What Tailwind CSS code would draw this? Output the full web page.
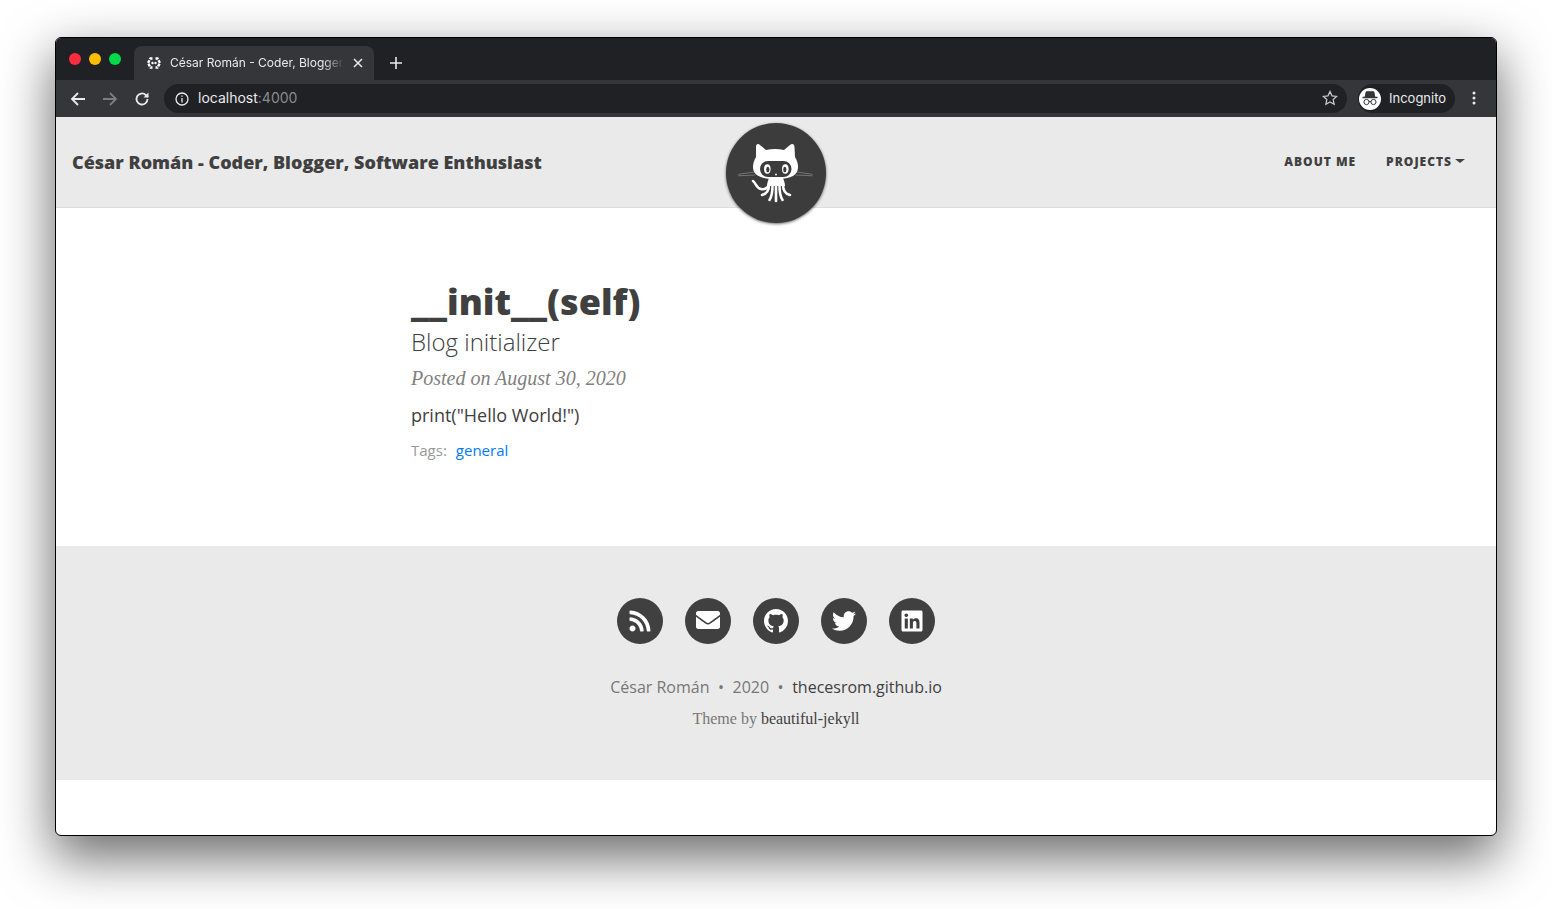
<!DOCTYPE html>
<html lang="en">
<head>
    <meta charset="UTF-8">
    <meta name="viewport" content="width=device-width, initial-scale=1.0">
    <title>César Román - Coder, Blogger, Software Enthusiast</title>
    <script src="https://cdn.jsdelivr.net/npm/@tailwindcss/browser@4"></script>
</head>
<body class="bg-white h-[909px] overflow-hidden font-['Open_Sans',sans-serif] pt-[37px] pl-[55px]">
    <!-- Browser window -->
    <div class="relative w-[1442px] h-[799px] flex flex-col bg-white border border-black rounded-[6px] overflow-hidden shadow-[0_20px_52px_2px_rgba(0,0,0,0.58)]">
        <!-- Tab strip -->
        <div class="h-[42px] shrink-0 bg-[#202124] flex items-end font-['Inter',sans-serif]">
            <div class="flex gap-2 w-[78px] pl-[13px] self-start pt-[15px]">
                <div class="w-3 h-3 rounded-full bg-[#ff2d3f]"></div>
                <div class="w-3 h-3 rounded-full bg-[#ffbd00]"></div>
                <div class="w-3 h-3 rounded-full bg-[#00d94a]"></div>
            </div>
            <div class="w-[240px] h-[34px] bg-[#35363a] rounded-t-[8px] flex items-center pl-3 pr-[11px]">
                <svg class="w-4 h-4 shrink-0" viewBox="0 0 16 16" fill="none" stroke="#fff" stroke-width="2.400">
                    <path d="M6.500 3.500H4.500L2 8l2.500 4.500h2M9.500 3.500h2L14 8l-2.500 4.500h-2" stroke-dasharray="3 1"/>
                    <circle cx="6.500" cy="8" r="1.200" fill="#fff" stroke="none"/>
                    <circle cx="9.500" cy="8" r="1.200" fill="#fff" stroke="none"/>
                </svg>
                <span class="ml-2 w-[174px] overflow-hidden whitespace-nowrap text-[12px] text-[#e8eaed] [mask-image:linear-gradient(to_right,black_88%,transparent)]">César Román - Coder, Blogger, Software Enthusiast</span>
                <svg class="w-[10px] h-[10px] ml-auto" viewBox="0 0 10 10" stroke="#e8eaed" stroke-width="1.500"><path d="M1 1l8 8M9 1l-8 8"/></svg>
            </div>
            <svg class="w-3 h-3 ml-4 mb-[11px]" viewBox="0 0 12 12" stroke="#e8eaed" stroke-width="1.600"><path d="M6 0v12M0 6h12"/></svg>
        </div>

        <!-- Toolbar -->
        <div class="h-[37px] shrink-0 bg-[#35363a] flex items-center pl-[14px] pr-[18px] font-['Inter',sans-serif]">
            <svg class="w-4 h-4 shrink-0" viewBox="0 0 16 16" fill="none" stroke="#e8eaed" stroke-width="1.800"><path d="M15 8H2M8 2L2 8l6 6"/></svg>
            <svg class="w-4 h-4 shrink-0 ml-4" viewBox="0 0 16 16" fill="none" stroke="#7c7d80" stroke-width="1.800"><path d="M1 8h13M8 2l6 6-6 6"/></svg>
            <svg class="w-4 h-4 shrink-0 ml-4" viewBox="0 0 16 16" fill="none" stroke="#e8eaed" stroke-width="1.800"><path d="M13.500 8A5.500 5.500 0 1 1 11.800 4L14 6"/><path d="M14.500 1.500V6.500H9.500" stroke="none" fill="#e8eaed"/></svg>
            <div class="ml-[14px] w-[1183px] h-[29px] rounded-full bg-[#202124] flex items-center pl-[11px] pr-[9px]">
                <svg class="w-[14px] h-[14px] shrink-0" viewBox="0 0 14 14" fill="none" stroke="#e8eaed" stroke-width="1.300"><circle cx="7" cy="7" r="6"/><path d="M7 6v4.500M7 3.500v1.300"/></svg>
                <span class="ml-[9px] mb-[2px] text-[14px] text-[#e8eaed]">localhost<span class="text-[#8a8b8e]">:4000</span></span>
                <svg class="w-4 h-4 ml-auto mb-[2px]" viewBox="0 0 16 16" fill="none" stroke="#c4c6c9" stroke-width="1.300"><path d="M8 1.500l2 4.300 4.700.6-3.500 3.200.9 4.700L8 12l-4.100 2.300.9-4.700L1.300 6.400 6 5.800z"/></svg>
            </div>
            <div class="ml-[11px] w-[97px] h-[29px] rounded-full bg-[#202124] flex items-center pl-[1px]">
                <div class="w-[22px] h-[22px] rounded-full bg-white">
                    <svg class="w-[22px] h-[22px]" viewBox="0 0 22 22" fill="none" stroke="#35363a" stroke-width="1">
                        <path d="M7.200 3.800h7.600l1 5.200H6.200z" fill="#35363a"/>
                        <path d="M3.500 9.500h15" stroke-width="1.400"/>
                        <circle cx="7.500" cy="14" r="2.600"/>
                        <circle cx="14.500" cy="14" r="2.600"/>
                        <path d="M10 13.500h2"/>
                    </svg>
                </div>
                <span class="ml-[8px] text-[13px] text-[#e8eaed]">Incognito</span>
            </div>
            <svg class="w-1 h-[14px] ml-[17px] mb-[2px]" viewBox="0 0 4 14" fill="#e8eaed"><circle cx="2" cy="2" r="1.500"/><circle cx="2" cy="7" r="1.500"/><circle cx="2" cy="12" r="1.500"/></svg>
        </div>

        <!-- Site nav -->
        <div class="h-[91px] shrink-0 bg-[#eaeaea] border-b border-[#dddddd] flex items-center justify-between pl-4 pr-[31px]">
            <a class="text-[18px] font-extrabold text-[#404040] leading-none">César Román - Coder, Blogger, Software Enthusiast</a>
            <div class="flex items-center gap-[30px] text-[12px] font-extrabold uppercase tracking-[1px] text-[#404040]">
                <a>About Me</a>
                <a class="flex items-center gap-[3px]">Projects<span class="w-0 h-0 mb-[2px] border-x-[5px] border-x-transparent border-t-[4px] border-t-[#404040]"></span></a>
            </div>
        </div>

        <!-- Avatar overlapping the nav -->
        <div class="absolute left-[670px] top-[85px] w-[100px] h-[100px] rounded-full bg-[#3c3c3c] shadow-[0_1px_3px_rgba(0,0,0,0.6)]">
            <svg class="w-full h-full" viewBox="0 0 100 100">
                <path d="M12.300 51.300l18.400-2.600M12.300 52.800l17-.8M86.500 51.300l-18.400-2.600M86.500 52.800l-17-.8" stroke="#8d8d8d" stroke-width="0.700" fill="none"/>
                <path d="M30 24c0-3 2-4 4-2l6 5c6-1.500 12-1.500 18 0l6-5c2-2 4.500-1 4.500 2l.5 10c2 3 3 7 3 10 0 8-6 12-22 12s-23-4-23-12c0-3 1-7 3-10z" fill="#fff"/>
                <rect x="34" y="38" width="31.500" height="16" rx="8" fill="#3c3c3c"/>
                <ellipse cx="41.300" cy="46" rx="3.300" ry="4.800" fill="#fff"/>
                <ellipse cx="59.300" cy="46" rx="3.300" ry="4.800" fill="#fff"/>
                <ellipse cx="41.800" cy="46.500" rx="1.600" ry="2.700" fill="#3c3c3c"/>
                <ellipse cx="58.800" cy="46.500" rx="1.600" ry="2.700" fill="#3c3c3c"/>
                <circle cx="50" cy="51.500" r="0.900" fill="#fff"/>
                <path d="M43 55h14c1 3 2 5 2 8H41c0-3 1-5 2-8z" fill="#fff"/>
                <path d="M43 62c0 6-3 9-7 10M46.500 62c0 8-1 12-3 15M50 62v16M53.500 62c0 8 1 12 3 15M57 62c0 6 3 9 7 10" stroke="#fff" stroke-width="2.600" stroke-linecap="round" fill="none"/>
                <path d="M27 58c3 2 3 7 8 8 3 1 6-1 8-4" stroke="#fff" stroke-width="2.500" stroke-linecap="round" fill="none"/>
            </svg>
        </div>

        <!-- Post -->
        <div class="h-[338px] shrink-0 pl-[355px] pt-[70px] text-[#404040]">
            <h1 class="text-[36px] font-extrabold leading-[48px]">__init__(self)</h1>
            <h2 class="text-[24px] font-light leading-[32px]">Blog initializer</h2>
            <p class="font-['Liberation_Serif',serif] text-[20px] text-[#808080] leading-[32px] mt-[4px]"><i>Posted on August 30, 2020</i></p>
            <p class="text-[18px] leading-[28px] mt-[7px]">print("Hello World!")</p>
            <p class="text-[15px] leading-[24px] mt-[9px]"><span class="text-[#999999]">Tags:</span><a class="ml-[9px] text-[#007bff]">general</a></p>
        </div>

        <!-- Footer -->
        <div class="h-[234px] shrink-0 bg-[#eaeaea] pt-[52px] flex flex-col items-center">
            <div class="flex gap-[22px]">
                <a class="w-[46px] h-[46px] rounded-full bg-[#404040] flex items-center justify-center">
                    <svg class="w-[24px] h-[24px]" viewBox="0 0 448 512" fill="#fff"><path d="M128.081 415.959c0 35.369-28.672 64.041-64.041 64.041S0 451.328 0 415.959s28.672-64.041 64.041-64.041 64.04 28.673 64.04 64.041zm175.66 47.25c-8.354-154.6-132.185-278.587-286.95-286.95C7.656 175.765 0 183.105 0 192.253v48.069c0 8.415 6.49 15.472 14.887 16.018 111.832 7.284 201.473 96.702 208.772 208.772.547 8.397 7.604 14.887 16.018 14.887h48.069c9.149.001 16.489-7.655 15.995-16.79zm144.249.288C439.596 229.677 251.465 40.445 16.503 32.01 7.473 31.686 0 38.981 0 48.016v48.068c0 8.625 6.835 15.645 15.453 15.999 191.179 7.839 344.627 161.316 352.465 352.465.353 8.618 7.373 15.453 15.999 15.453h48.068c9.034-.001 16.329-7.474 16.005-16.504z"/></svg>
                </a>
                <a class="w-[46px] h-[46px] rounded-full bg-[#404040] flex items-center justify-center">
                    <svg class="w-[24px] h-[24px] mb-[2px]" viewBox="0 0 512 512" fill="#fff"><path d="M502.3 190.8c3.900-3.100 9.700-.2 9.700 4.700V400c0 26.500-21.500 48-48 48H48c-26.500 0-48-21.500-48-48V195.600c0-5 5.700-7.800 9.700-4.700 22.400 17.400 52.100 39.500 154.100 113.600 21.100 15.400 56.700 47.800 92.200 47.600 35.700.3 72-32.800 92.300-47.600 102-74.100 131.600-96.300 154-113.700zM256 320c23.200.4 56.600-29.200 73.400-41.400 132.700-96.300 142.800-104.700 173.400-128.700 5.800-4.500 9.200-11.500 9.200-18.900v-19c0-26.500-21.500-48-48-48H48C21.500 64 0 85.500 0 112v19c0 7.400 3.400 14.300 9.200 18.900 30.600 23.900 40.700 32.400 173.400 128.700 16.800 12.200 50.200 41.800 73.400 41.400z"/></svg>
                </a>
                <a class="w-[46px] h-[46px] rounded-full bg-[#404040] flex items-center justify-center">
                    <svg class="w-[24px] h-[24px]" viewBox="0 0 16 16" fill="#fff"><path d="M8 0C3.580 0 0 3.580 0 8c0 3.540 2.290 6.530 5.470 7.590.4.070.55-.17.55-.38 0-.19-.01-.82-.01-1.490-2.010.37-2.530-.49-2.690-.94-.09-.23-.48-.94-.82-1.130-.28-.15-.68-.52-.01-.53.630-.01 1.080.58 1.230.82.720 1.210 1.870.87 2.330.66.070-.52.28-.87.51-1.070-1.780-.2-3.640-.89-3.640-3.950 0-.87.31-1.590.82-2.150-.08-.2-.36-1.020.08-2.120 0 0 .67-.21 2.200.82.640-.18 1.320-.27 2-.27s1.360.09 2 .27c1.530-1.040 2.200-.82 2.200-.82.44 1.100.16 1.920.08 2.120.51.56.82 1.270.82 2.150 0 3.070-1.870 3.750-3.650 3.950.29.25.54.73.54 1.480 0 1.070-.01 1.930-.01 2.200 0 .21.15.46.55.38A8.010 8.010 0 0 0 16 8c0-4.420-3.580-8-8-8z"/></svg>
                </a>
                <a class="w-[46px] h-[46px] rounded-full bg-[#404040] flex items-center justify-center">
                    <svg class="w-[24px] h-[24px]" viewBox="0 0 512 512" fill="#fff"><path d="M459.370 151.716c.325 4.548.325 9.097.325 13.645 0 138.720-105.583 298.558-298.558 298.558-59.452 0-114.680-17.219-161.137-47.106 8.447.974 16.568 1.299 25.340 1.299 49.055 0 94.213-16.568 130.274-44.832-46.132-.975-84.792-31.188-98.112-72.772 6.498.974 12.995 1.624 19.818 1.624 9.421 0 18.843-1.300 27.614-3.573-48.081-9.747-84.143-51.980-84.143-102.985v-1.299c13.969 7.797 30.214 12.670 47.431 13.319-28.264-18.843-46.781-51.005-46.781-87.391 0-19.492 5.197-37.360 14.294-52.954 51.655 63.675 129.300 105.258 216.365 109.807-1.624-7.797-2.599-15.918-2.599-24.040 0-57.828 46.782-104.934 104.934-104.934 30.213 0 57.502 12.670 76.670 33.137 23.715-4.548 46.456-13.320 66.599-25.340-7.798 24.366-24.366 44.833-46.132 57.827 21.117-2.273 41.584-8.122 60.426-16.243-14.292 20.791-32.161 39.308-52.628 54.253z"/></svg>
                </a>
                <a class="w-[46px] h-[46px] rounded-full bg-[#404040] flex items-center justify-center">
                    <svg class="w-[24px] h-[24px]" viewBox="0 0 448 512" fill="#fff"><path d="M416 32H31.900C14.300 32 0 46.500 0 64.300v383.400C0 465.500 14.300 480 31.900 480H416c17.600 0 32-14.500 32-32.300V64.300c0-17.800-14.400-32.300-32-32.300zM135.400 416H69V202.200h66.500V416zm-33.200-243c-21.300 0-38.500-17.300-38.500-38.500S80.900 96 102.200 96c21.200 0 38.500 17.300 38.500 38.500 0 21.300-17.200 38.500-38.500 38.500zm282.100 243h-66.400V312c0-24.800-.5-56.700-34.500-56.700-34.600 0-39.900 27-39.900 54.900V416h-66.400V202.200h63.700v29.200h.9c8.900-16.800 30.600-34.500 62.900-34.500 67.200 0 79.700 44.300 79.700 101.900V416z"/></svg>
                </a>
            </div>
            <p class="mt-[31px] text-[16px] leading-[24px] text-[#777777]">César Román<span class="mx-[8.5px]">•</span>2020<span class="mx-[8.5px]">•</span><a class="text-[#404040]">thecesrom.github.io</a></p>
            <p class="mt-[10px] font-['Liberation_Serif',serif] text-[16px] leading-[20px] text-[#777777]">Theme by <a class="text-[#404040]">beautiful-jekyll</a></p>
        </div>
    </div>
</body>
</html>
